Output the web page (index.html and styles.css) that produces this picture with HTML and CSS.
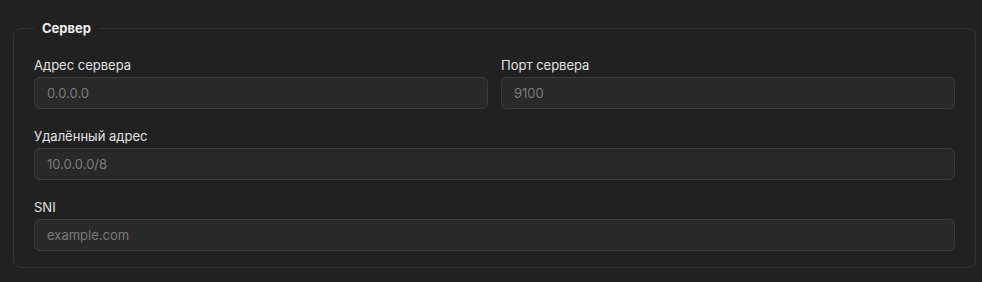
FILE: index.html
```html
<!DOCTYPE html>
<html lang="ru">
<head>
  <meta charset="UTF-8">
  <title>Сервер</title>
  <meta name="viewport" content="width=device-width, initial-scale=1.0" />
  <link rel="stylesheet" href="styles.css">
</head>
<body>
  <form class="settings">
    <fieldset class="group">
      <legend>Сервер</legend>

      <div class="row two">
        <div class="field">
          <label for="addr">Адрес сервера</label>
          <input id="addr" type="text" placeholder="0.0.0.0">
        </div>
        <div class="field">
          <label for="port">Порт сервера</label>
          <input id="port" type="text" placeholder="9100">
        </div>
      </div>

      <div class="field">
        <label for="remote">Удалённый адрес</label>
        <input id="remote" type="text" placeholder="10.0.0.0/8">
      </div>

      <div class="field">
        <label for="sni">SNI</label>
        <input id="sni" type="text" placeholder="example.com">
      </div>
    </fieldset>
  </form>
</body>
</html>
```

FILE: styles.css
```css
html, body {
  margin: 0;
  background: #212121;
}

body {
  color: #e4e4e4;
  font-family: Inter, "Noto Sans", sans-serif;
  font-size: 13px;
  padding: 19px 6px 0 13px;
}

.group {
  margin: 0;
  border: 1px solid #333333;
  border-radius: 8px;
  padding: 19px 20px 16px 20px;
  display: flex;
  flex-direction: column;
  gap: 18px;
}

.group legend {
  font-weight: 700;
  font-size: 13px;
  padding: 0 8px;
  margin-left: 0;
  line-height: 18px;
  color: #ececec;
}

.row.two {
  display: grid;
  grid-template-columns: 1fr 1fr;
  gap: 13px;
}

.field {
  display: flex;
  flex-direction: column;
  gap: 3px;
}

.field label {
  line-height: 18px;
  color: #e2e2e2;
}

.field input {
  height: 32px;
  box-sizing: border-box;
  background: #292929;
  border: 1px solid #3c3c3c;
  border-radius: 6px;
  padding: 0 12px;
  font-family: inherit;
  font-size: 13px;
  color: #e4e4e4;
  outline: none;
}

.field input::placeholder {
  color: #7a7a7a;
}
```
